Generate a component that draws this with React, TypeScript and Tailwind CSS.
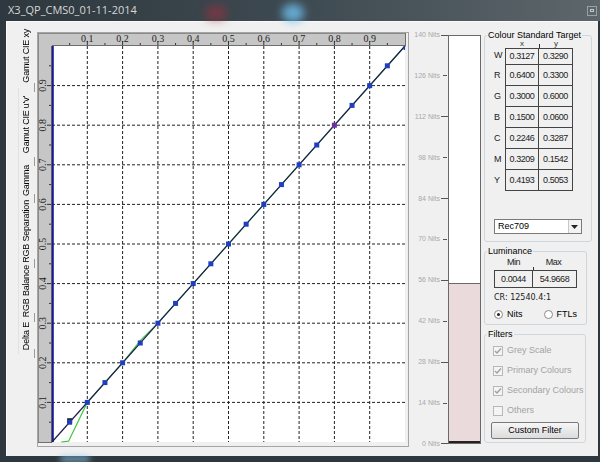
import React from 'react';

const ui = { fontFamily: '"Liberation Sans", Arial, sans-serif' };
const narrow = { fontFamily: '"Liberation Sans", Arial, sans-serif', letterSpacing: '-0.45px' };

const targets = [
  ['W', '0.3127', '0.3290'],
  ['R', '0.6400', '0.3300'],
  ['G', '0.3000', '0.6000'],
  ['B', '0.1500', '0.0600'],
  ['C', '0.2246', '0.3287'],
  ['M', '0.3209', '0.1542'],
  ['Y', '0.4193', '0.5053'],
];

const tabs = [
  { label: 'Gamut CIE xy', h: 'h-[64px]' },
  { label: "Gamut CIE u'v'", h: 'h-[74px]' },
  { label: 'Gamma', h: 'h-[37px]' },
  { label: 'RGB Separation', h: 'h-[65px]' },
  { label: 'RGB Balance', h: 'h-[54px]' },
  { label: 'Delta E', h: 'h-[36px]' },
];

const nits = [140, 126, 112, 98, 84, 70, 56, 42, 28, 14, 0];

// chart geometry (svg coords; svg sits at page 36,32)
const X = (v: number) => 15 + v * 353;
const Y = (v: number) => 410 - v * 396;
const steps = Array.from({ length: 9 }, (_, i) => (i + 1) / 10);
const minor = Array.from({ length: 10 }, (_, i) => i / 10 + 0.05);
const points = Array.from({ length: 19 }, (_, i) => (i + 1) * 0.05);

function Chart() {
  const green = [
    [0.026, 0],
    [0.047, 0.002],
    [0.1, 0.1],
    [0.2, 0.2],
    [0.25, 0.256],
    [0.3, 0.3],
    [0.95, 0.95],
    [1, 1],
  ];
  return (
    <svg width={372} height={415} className="block shrink-0">
      <rect x={0.5} y={0.5} width={371} height={414} fill="#f0f0f0" stroke="#a5a5a5" />
      <rect x={1} y={1} width={368} height={13} fill="#c6c6c6" />
      <rect x={1} y={1} width={14} height={410} fill="#c6c6c6" />
      <line x1={1} y1={1.5} x2={369} y2={1.5} stroke="#8a8a8a" />
      <line x1={1.5} y1={1} x2={1.5} y2={411} stroke="#8a8a8a" />
      <line x1={15} y1={13.5} x2={369} y2={13.5} stroke="#6e6e6e" />
      <line x1={368.5} y1={1} x2={368.5} y2={14} stroke="#6e6e6e" />
      <line x1={14.5} y1={14} x2={14.5} y2={411} stroke="#6e6e6e" />
      <line x1={1} y1={410.5} x2={15} y2={410.5} stroke="#6e6e6e" />
      <rect x={15} y={14} width={353} height={396} fill="#fff" />

      {steps.map((v) => (
        <g key={'t' + v}>
          <line x1={X(v)} y1={9} x2={X(v)} y2={13} stroke="#333" />
          <text x={X(v)} y={9.5} fontSize={10} textAnchor="middle" fill="#222" fontFamily='"Liberation Serif", serif'>
            {v.toFixed(1)}
          </text>
          <line x1={10} y1={Y(v)} x2={14} y2={Y(v)} stroke="#333" />
          <text
            x={9}
            y={Y(v)}
            fontSize={10}
            textAnchor="middle"
            fill="#222"
            fontFamily='"Liberation Serif", serif'
            transform={`rotate(-90 9 ${Y(v)})`}
          >
            {v.toFixed(1)}
          </text>
          <line x1={X(v)} y1={14} x2={X(v)} y2={410} stroke="#222" strokeDasharray="3 2" />
          <line x1={15} y1={Y(v)} x2={368} y2={Y(v)} stroke="#222" strokeDasharray="3 2" />
        </g>
      ))}
      {minor.map((v) => (
        <g key={'m' + v}>
          <line x1={X(v)} y1={11} x2={X(v)} y2={13} stroke="#333" />
          <line x1={12} y1={Y(v)} x2={14} y2={Y(v)} stroke="#333" />
        </g>
      ))}

      <line x1={15.8} y1={14} x2={15.8} y2={410} stroke="#1b1b90" strokeWidth={2} />
      <polyline
        points={green.map(([a, b]) => `${X(a)},${Y(b)}`).join(' ')}
        fill="none"
        stroke="#40c840"
        strokeWidth={1.2}
      />
      <line x1={X(0)} y1={Y(0)} x2={X(1)} y2={Y(1)} stroke="#1c1c50" strokeWidth={1.2} />
      <line x1={X(0.998)} y1={Y(1)} x2={X(0.998)} y2={Y(0.99)} stroke="#1f3fbf" strokeWidth={1.5} />
      <rect x={X(0.05) - 2.5} y={Y(0.05) - 4} width={5} height={5} fill="#222" />
      {points.map((v) => (
        <rect
          key={'p' + v}
          x={X(v) - 2.5}
          y={Y(v) - 2.5}
          width={5}
          height={5}
          fill={Math.abs(v - 0.8) < 0.01 ? '#6a2fa0' : '#1f3fbf'}
        />
      ))}
    </svg>
  );
}

function Gauge() {
  return (
    <div className="flex mt-[9px] ml-[1px]">
      <div className="flex flex-col justify-between h-[417px] w-[38px]">
        {nits.map((n, i) => (
          <div key={n} className="flex items-center justify-end h-[8px]">
            <span className="text-[7px] leading-[8px] text-[#a8a8a8]" style={ui}>
              {n} Nits
            </span>
            {i % 2 === 0 ? (
              <span className="ml-[1px] w-[7px] h-px bg-[#555]" />
            ) : (
              <span className="ml-[3px] mr-[1px] w-[4px] h-px bg-[#555]" />
            )}
          </div>
        ))}
      </div>
      <div className="mt-[4px] w-[33px] h-[409px] border border-[#6a6a6a] bg-white flex flex-col justify-end">
        <div className="h-[160px] bg-[#ebdadb] border-t border-[#6a6a6a] border-b-2 border-b-[#222]" />
      </div>
    </div>
  );
}

function Check({ label, checked }: { label: string; checked: boolean }) {
  return (
    <div className="flex items-center h-[20px] pl-[8px]">
      <span className="w-[10px] h-[10px] border border-[#b8b8b8] bg-[#f4f4f4] flex items-center justify-center">
        {checked && (
          <svg width={8} height={8} viewBox="0 0 8 8">
            <path d="M1 4 L3 6 L7 1.5" fill="none" stroke="#a0a0a0" strokeWidth={1.4} />
          </svg>
        )}
      </span>
      <span className="ml-[4px] text-[9px] whitespace-nowrap text-[#a3a3a3]" style={ui}>
        {label}
      </span>
    </div>
  );
}

function Radio({ label, on }: { label: string; on: boolean }) {
  return (
    <div className="flex items-center">
      <span className="w-[9px] h-[9px] rounded-full border border-[#8a8a8a] bg-white flex items-center justify-center">
        {on && <span className="w-[3px] h-[3px] rounded-full bg-[#222]" />}
      </span>
      <span className="ml-[4px] text-[9px] text-black" style={ui}>
        {label}
      </span>
    </div>
  );
}

function RightPanel() {
  return (
    <div className="w-[102px] ml-[3px] flex flex-col" style={ui}>
      <fieldset className="mt-[9px] h-[211px] border border-[#d0d7dc] rounded-[3px] px-[9px]">
        <legend className="ml-[-7px] px-[1px] text-[9px] leading-[9px] whitespace-nowrap text-black">
          Colour Standard Target
        </legend>
        <div className="flex pl-[11px] h-[8px] text-[8px] leading-[8px] text-[#333]">
          <span className="w-[34px] text-center">x</span>
          <span className="w-px h-[4px] mt-[4px] bg-[#333]" />
          <span className="w-[32px] text-center">y</span>
        </div>
        <div className="flex flex-col">
          {targets.map(([k, a, b], i) => (
            <div key={k} className={`flex ${i === 0 ? 'h-[17px]' : 'h-[21px]'}`}>
              <span className={`w-[11px] text-[9px] ${i === 0 ? 'leading-[15px]' : 'leading-[21px]'} text-[#222]`}>{k}</span>
              <div
                className={`flex border-x border-b border-[#444] ${i === 0 ? 'border-t leading-[14px]' : 'leading-[20px]'} text-[9px] text-[#222]`}
                style={narrow}
              >
                <span className="w-[33px] text-center border-r border-[#444]">{a}</span>
                <span className="w-[33px] text-center">{b}</span>
              </div>
            </div>
          ))}
        </div>
        <div className="mt-[28px] h-[15px] border border-[#7a7a7a] bg-white flex items-center">
          <span className="flex-1 pl-[3px] text-[9px] text-black">Rec709</span>
          <span className="w-[13px] h-[13px] border-l border-[#c8c8c8] bg-[#f2f2f2] flex items-center justify-center">
            <svg width={7} height={4} viewBox="0 0 7 4">
              <path d="M0 0 H7 L3.5 4 Z" fill="#222" />
            </svg>
          </span>
        </div>
      </fieldset>

      <fieldset className="mt-[4px] h-[79px] border border-[#d0d7dc] rounded-[3px] px-[9px]">
        <legend className="ml-[-7px] px-[1px] text-[9px] leading-[11px] text-black">Luminance</legend>
        <div className="flex text-[9px] leading-[10px] text-[#222]" style={narrow}>
          <span className="w-[39px] text-center">Min</span>
          <span className="w-[41px] text-center">Max</span>
        </div>
        <div className="flex pl-[39px]">
          <span className="w-px h-[3px] bg-[#333]" />
        </div>
        <div className="flex h-[18px] border border-[#444] text-[9px] leading-[16px] text-[#222]" style={narrow}>
          <span className="w-[38px] text-center border-r border-[#444]">0.0044</span>
          <span className="flex-1 text-center">54.9668</span>
        </div>
        <div className="mt-[4px] text-[8px] leading-[12px] text-[#222]" style={{ fontFamily: '"DejaVu Sans", sans-serif' }}>
          CR: 12540.4:1
        </div>
        <div className="mt-[4px] flex gap-[21px]">
          <Radio label="Nits" on />
          <Radio label="FTLs" on={false} />
        </div>
      </fieldset>

      <fieldset className="mt-[4px] h-[114px] border border-[#d0d7dc] rounded-[3px] px-[0px]">
        <legend className="ml-[2px] px-[1px] text-[9px] leading-[11px] text-black">Filters</legend>
        <div className="flex flex-col pt-[1px]">
          <Check label="Grey Scale" checked />
          <Check label="Primary Colours" checked />
          <Check label="Secondary Colours" checked />
          <Check label="Others" checked={false} />
        </div>
        <div className="mx-[6px] mt-[1px] h-[17px] border border-[#7a7a7a] rounded-[2px] bg-gradient-to-b from-[#f6f6f6] to-[#dcdcdc] flex items-center justify-center text-[9px] text-black">
          Custom Filter
        </div>
      </fieldset>
    </div>
  );
}

export default function App() {
  return (
    <div className="w-[600px] h-[462px] bg-[#2d373d] flex flex-col overflow-hidden relative">
      <div className="h-[21px] flex items-center pl-[8px] relative bg-gradient-to-r from-[#2e383e] via-[#3e4a51] to-[#5d666b]">
        <div className="absolute left-[205px] top-[6px] w-[22px] h-[14px] rounded-full bg-[#a03040] opacity-60 blur-[5px]" />
        <div className="absolute left-[282px] top-[4px] w-[22px] h-[18px] rounded-full bg-[#6ec0f0] opacity-80 blur-[4px]" />
        <span className="relative text-[11px] text-[#d6d6d6]" style={{ fontFamily: '"Open Sans", sans-serif' }}>
          X3_QP_CMS0_01-11-2014
        </span>
        <span className="ml-auto mr-[3px] w-[10px] h-[10px] border border-[#9aa0a4] flex items-center justify-center">
          <span className="w-[4px] h-[3px] border border-[#c8c8c8]" />
        </span>
      </div>
      <div className="flex-1 flex pl-[6px] pr-[2px] pb-[6px]">
        <div className="flex-1 bg-[#f0f0f0] border-t border-l border-[#fafafa] flex">
          <div className="w-[30px] flex flex-col pt-[2px] pl-[11px]">
            {tabs.map((t, i) => (
              <div
                key={t.label}
                className={`${t.h} w-[17px] flex items-center justify-center relative border-l ${i === 0 ? 'border-[#f0f0f0]' : 'border-[#e2e2e2]'}`}
              >
                <span
                  className="[writing-mode:vertical-rl] rotate-180 text-[9px] tracking-[-0.2px] text-black whitespace-nowrap"
                  style={ui}
                >
                  {t.label}
                </span>
                <span className="absolute right-[0px] bottom-[-4px] w-px h-[9px] bg-[#9a9a9a]" />
              </div>
            ))}
          </div>
          <div className="mt-[10px]">
            <Chart />
          </div>
          <Gauge />
          <RightPanel />
        </div>
      </div>
      <div className="absolute left-[60px] bottom-[0px] w-[30px] h-[6px] rounded-full bg-[#8fc8ee] opacity-70 blur-[3px]" />
    </div>
  );
}
